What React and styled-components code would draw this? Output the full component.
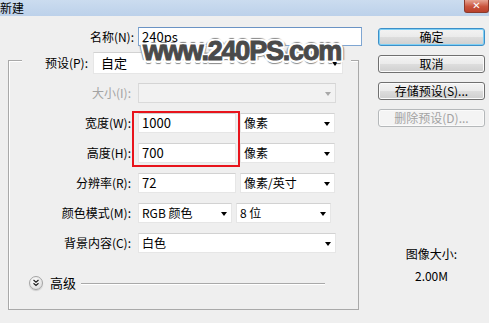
import React from "react";
import styled, { createGlobalStyle } from "styled-components";

const GlobalStyle = createGlobalStyle`
  html, body { margin: 0; padding: 0; background: #efefef; }
  body { font-family: "Noto Sans CJK SC", "Noto Sans", sans-serif; font-size: 12px; color: #000; }
`;

const Window = styled.div`
  position: relative;
  width: 489px;
  height: 323px;
  overflow: hidden;
  background: #efefef;
`;

const TitleBar = styled.div`
  height: 16px;
  display: flex;
  align-items: flex-start;
  justify-content: space-between;
  background: linear-gradient(#cbdcef, #bcd1ea);
`;

const Title = styled.div`
  font-size: 12px;
  line-height: 15px;
`;

const Close = styled.div`
  width: 25px;
  height: 13px;
  box-sizing: border-box;
  border: 1px solid #8a3a2c;
  border-top: none;
  border-radius: 0 0 3px 3px;
  background: linear-gradient(#e6a493, #c9533c 55%, #b9412c);
  display: flex;
  align-items: center;
  justify-content: center;
  color: #fff;
  font-family: "DejaVu Sans", sans-serif;
  font-weight: bold;
  font-size: 10px;
  line-height: 10px;
`;

const Main = styled.div`
  display: flex;
  padding-top: 11px;
`;

const LeftCol = styled.div`
  width: 362px;
  display: flex;
  flex-direction: column;
`;

const Row = styled.div`
  display: flex;
  align-items: center;
  gap: 4px;
  height: ${(p) => p.$h || 20}px;
  margin-top: ${(p) => p.$mt || 0}px;
`;

const Label = styled.div`
  box-sizing: border-box;
  width: ${(p) => p.$w}px;
  padding-right: ${(p) => p.$pr || 0}px;
  text-align: right;
  white-space: nowrap;
  line-height: 16px;
  color: ${(p) => (p.$disabled ? "#a3a3a3" : "#000")};
`;

const Field = styled.div`
  box-sizing: border-box;
  width: ${(p) => p.$w}px;
  height: ${(p) => p.$h || 20}px;
  background: ${(p) => (p.$disabled ? "#f2f2f2" : "#fff")};
  border: 1px solid ${(p) => (p.$focus ? "#7fa6d2" : p.$disabled ? "#dadada" : "#e6e6e6")};
  border-top-color: ${(p) => (p.$focus ? "#6a93c4" : p.$disabled ? "#d4d4d4" : "#d2d2d2")};
  display: flex;
  align-items: center;
  justify-content: space-between;
  padding: 0 4px 0 ${(p) => p.$pl ?? 3}px;
  font-size: ${(p) => p.$fs || 12}px;
  line-height: 16px;
  white-space: nowrap;
`;

const Arrow = styled.span`
  width: 0;
  height: 0;
  border-left: 3.5px solid transparent;
  border-right: 3.5px solid transparent;
  border-top: 4px solid ${(p) => (p.$disabled ? "#a8a8a8" : "#000")};
  margin-top: 1px;
`;

const GroupBox = styled.div`
  margin: 14px 0 0 8px;
  width: 351px;
  height: 250px;
  box-sizing: border-box;
  border: 1px solid #a9a9a9;
  box-shadow: inset 1px 1px 0 #fff;
  display: flex;
  flex-direction: column;
`;

const PresetRow = styled.div`
  display: flex;
  align-items: center;
  gap: 5px;
  margin: -9px 0 0 13px;
  width: 329px;
  height: 22px;
  background: #efefef;
`;

const FieldRow = styled(Row)`
  margin-top: ${(p) => p.$mt ?? 10}px;
`;

const AdvancedRow = styled.div`
  display: flex;
  align-items: center;
  margin: 22px 0 0 20px;
  height: 16px;
  width: 296px;
`;

const Disclosure = styled.div`
  width: 14px;
  height: 14px;
  box-sizing: border-box;
  border-radius: 50%;
  border: 1px solid #a5a5a5;
  background: radial-gradient(circle at 40% 35%, #ffffff, #e2e2e2 70%, #cfcfcf);
  box-shadow: 0 1px 1px rgba(0, 0, 0, 0.15);
  display: flex;
  align-items: center;
  justify-content: center;
`;

const AdvLabel = styled.div`
  margin-left: 7px;
  font-size: 13px;
  line-height: 16px;
`;

const Rule = styled.div`
  flex: 1;
  margin-left: 5px;
  height: 1px;
  background: #a9a9a9;
  box-shadow: 0 1px 0 #fff;
`;

const RightCol = styled.div`
  margin-left: 16px;
  width: 107px;
  padding-top: 1px;
  display: flex;
  flex-direction: column;
  gap: 9px;
`;

const Button = styled.div`
  box-sizing: border-box;
  height: 18px;
  border-radius: 3px;
  border: 1px solid ${(p) => (p.$primary ? "#3d8fc8" : p.$disabled ? "#b5b8ba" : "#707070")};
  box-shadow: ${(p) => (p.$primary ? "inset 0 0 0 1px #7fd0f5" : "inset 0 0 0 1px #fbfbfb")};
  background: ${(p) =>
    p.$disabled ? "#f4f4f4" : "linear-gradient(#f3f3f3 0%, #ebebeb 48%, #dddddd 52%, #cfcfcf 100%)"};
  color: ${(p) => (p.$disabled ? "#a3a3a3" : "#000")};
  display: flex;
  align-items: center;
  justify-content: center;
  font-size: 12px;
  line-height: 14px;
  white-space: nowrap;
`;

const Info = styled.div`
  text-align: center;
  line-height: 16px;
  margin-top: ${(p) => p.$mt}px;
`;

const Watermark = styled.div`
  position: absolute;
  left: 143px;
  top: 38px;
  font-family: "Liberation Sans", Arial, sans-serif;
  font-weight: 900;
  font-size: 27px;
  line-height: 27px;
  letter-spacing: -1.2px;
  color: #4a4a4a;
  -webkit-text-stroke: 1px #4a4a4a;
  white-space: nowrap;
  text-shadow:
    2.5px 0 0 #fff, -2.5px 0 0 #fff, 0 2.5px 0 #fff, 0 -2.5px 0 #fff,
    2px 2px 0 #fff, -2px 2px 0 #fff, 2px -2px 0 #fff, -2px -2px 0 #fff,
    3.5px 0 1px #888, -3.5px 0 1px #888, 0 3.5px 1px #888, 0 -3.5px 1px #888;
`;

const Highlight = styled.div`
  position: absolute;
  left: 132px;
  top: 111px;
  width: 108px;
  height: 56px;
  box-sizing: border-box;
  border: 2px solid #e8141c;
`;

function Select({ w, children, disabled }) {
  return (
    <Field $w={w} $disabled={disabled}>
      <span>{children}</span>
      <Arrow $disabled={disabled} />
    </Field>
  );
}

export default function App() {
  return (
    <Window>
      <GlobalStyle />
      <TitleBar>
        <Title>新建</Title>
        <Close>✕</Close>
      </TitleBar>
      <Main>
        <LeftCol>
          <Row $h={19}>
            <Label $w={134}>名称(N):</Label>
            <Field $w={224} $h={19} $focus $fs={13}>240ps</Field>
          </Row>
          <GroupBox>
            <PresetRow>
              <Label $w={66}>预设(P):</Label>
              <Field $w={250} $h={22} $pl={7} $fs={13}>
                <span>自定</span>
                <Arrow />
              </Field>
            </PresetRow>
            <FieldRow $mt={9}>
              <Label $w={125} $pr={3} $disabled>大小(I):</Label>
              <Select w={198} disabled></Select>
            </FieldRow>
            <FieldRow>
              <Label $w={125} $pr={3}>宽度(W):</Label>
              <Field $w={98} $fs={13}>1000</Field>
              <Select w={95}>像素</Select>
            </FieldRow>
            <FieldRow>
              <Label $w={125} $pr={3}>高度(H):</Label>
              <Field $w={98} $fs={13}>700</Field>
              <Select w={95}>像素</Select>
            </FieldRow>
            <FieldRow>
              <Label $w={125} $pr={3}>分辨率(R):</Label>
              <Field $w={98} $fs={13}>72</Field>
              <Select w={95}>像素/英寸</Select>
            </FieldRow>
            <FieldRow>
              <Label $w={125} $pr={3}>颜色模式(M):</Label>
              <Select w={94}>RGB 颜色</Select>
              <Select w={95}>8 位</Select>
            </FieldRow>
            <FieldRow>
              <Label $w={125} $pr={3}>背景内容(C):</Label>
              <Select w={198}>白色</Select>
            </FieldRow>
            <AdvancedRow>
              <Disclosure>
                <svg width="8" height="8" viewBox="0 0 8 8">
                  <path d="M1.5 1 L4 3.2 L6.5 1 M1.5 4.2 L4 6.4 L6.5 4.2" fill="none" stroke="#222" strokeWidth="1.2" />
                </svg>
              </Disclosure>
              <AdvLabel>高级</AdvLabel>
              <Rule />
            </AdvancedRow>
          </GroupBox>
        </LeftCol>
        <RightCol>
          <Button $primary>确定</Button>
          <Button>取消</Button>
          <Button>存储预设(S)...</Button>
          <Button $disabled>删除预设(D)...</Button>
          <Info $mt={110}>图像大小:</Info>
          <Info $mt={-3}>2.00M</Info>
        </RightCol>
      </Main>
      <Watermark>www.240PS.com</Watermark>
      <Highlight />
    </Window>
  );
}
